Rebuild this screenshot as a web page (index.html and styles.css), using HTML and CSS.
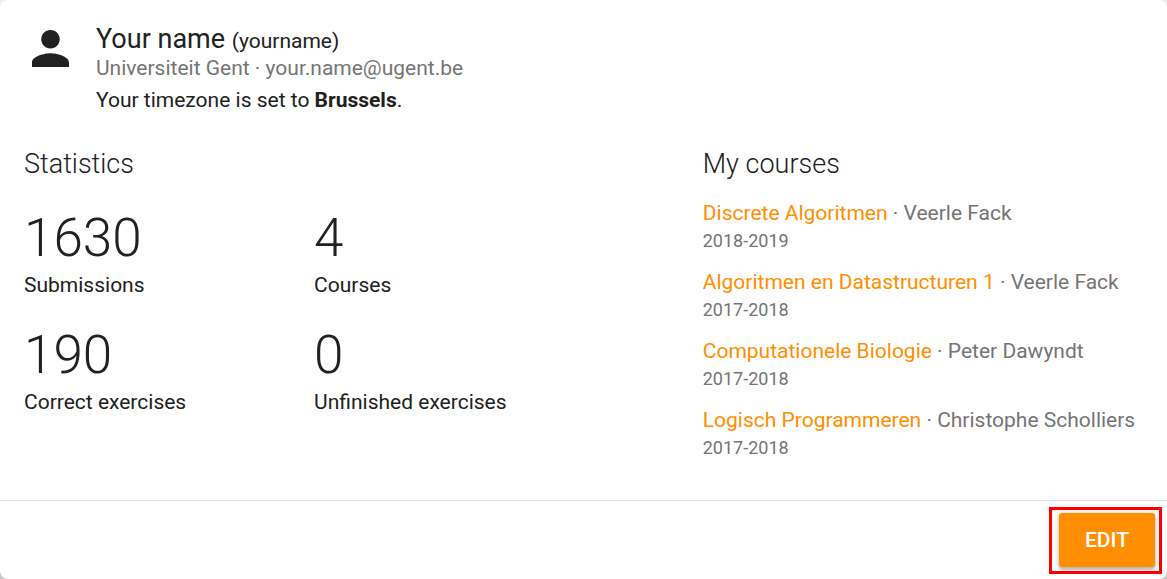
FILE: index.html
```html
<!DOCTYPE html>
<html lang="en">
<head>
<meta charset="utf-8">
<title>Profile</title>
<meta name="viewport" content="width=device-width, initial-scale=1">
<link rel="stylesheet" href="styles.css">
</head>
<body>
<main class="card">
  <header class="profile">
    <svg class="avatar" viewBox="4 4 16 16" aria-hidden="true"><path d="M12 12c2.21 0 4-1.79 4-4s-1.790-4-4-4-4 1.790-4 4 1.790 4 4 4zm0 2c-2.670 0-8 1.340-8 4v2h16v-2c0-2.660-5.330-4-8-4z"/></svg>
    <div class="identity">
      <h1 class="name">Your name <small class="username">(yourname)</small></h1>
      <p class="affiliation">Universiteit Gent · your.name@ugent.be</p>
      <p class="timezone">Your timezone is set to <b>Brussels</b>.</p>
    </div>
  </header>
  <div class="content">
    <section class="statistics">
      <h2 class="heading">Statistics</h2>
      <div class="stats">
        <div class="stat"><div class="value">1630</div><div class="label">Submissions</div></div>
        <div class="stat"><div class="value">4</div><div class="label">Courses</div></div>
        <div class="stat"><div class="value">190</div><div class="label">Correct exercises</div></div>
        <div class="stat"><div class="value">0</div><div class="label">Unfinished exercises</div></div>
      </div>
    </section>
    <section class="my-courses">
      <h2 class="heading">My courses</h2>
      <ul class="courses">
        <li class="course"><a href="#">Discrete Algoritmen</a> · Veerle Fack<div class="year">2018-2019</div></li>
        <li class="course"><a href="#">Algoritmen en Datastructuren 1</a> · Veerle Fack<div class="year">2017-2018</div></li>
        <li class="course"><a href="#">Computationele Biologie</a> · Peter Dawyndt<div class="year">2017-2018</div></li>
        <li class="course"><a href="#">Logisch Programmeren</a> · Christophe Scholliers<div class="year">2017-2018</div></li>
      </ul>
    </section>
  </div>
  <footer class="actions">
    <div class="highlight"><button class="edit" type="button">EDIT</button></div>
  </footer>
</main>
</body>
</html>
```
FILE: styles.css
```css
* { box-sizing: border-box; }
body {
  margin: 0;
  background: linear-gradient(#eee, #c8c8c8);
  color: #212121;
  font: 21px/28px Roboto, "Liberation Sans", sans-serif;
}
h1, h2, p, ul { margin: 0; padding: 0; }
.card {
  display: flex;
  flex-direction: column;
  min-height: 100vh;
  background: #fff;
  border-radius: 8px;
}
.profile {
  display: flex;
  padding: 24px 24px 0;
}
.avatar {
  width: 37px;
  height: 37px;
  margin: 6px 27px 0 8px;
  flex: none;
  fill: #212121;
}
.name {
  font-size: 27px;
  font-weight: 400;
  line-height: 30px;
}
.username {
  font-size: 21px;
  line-height: 20px;
}
.affiliation { color: #757575; }
.timezone { margin-top: 4px; }
.content {
  display: grid;
  grid-template-columns: 7fr 5fr;
  flex: 1;
  padding: 34px 24px;
}
.heading {
  font-size: 27px;
  font-weight: 300;
  line-height: 32px;
}
.stats {
  display: grid;
  grid-template-columns: 4fr 5fr;
  row-gap: 23px;
  margin-top: 26px;
}
.value {
  font-size: 53px;
  font-weight: 300;
  line-height: 64px;
}
.label { line-height: 30px; }
.my-courses { padding-left: 26px; }
.courses {
  display: grid;
  gap: 13px;
  margin-top: 19px;
  list-style: none;
  color: #757575;
}
a {
  color: #ff8f00;
  text-decoration: none;
}
.year { font-size: 18px; }
.actions {
  display: flex;
  justify-content: flex-end;
  padding: 6px 5px 5px;
  border-top: 1px solid #e0e0e0;
}
.highlight {
  padding: 3px 4px 4px 7px;
  border: 3px solid #f00;
}
.edit {
  display: block;
  width: 96px;
  height: 54px;
  border: 0;
  border-radius: 3px;
  background: #ff8f00;
  color: #fff;
  font: 500 21px/28px Roboto, "Liberation Sans", sans-serif;
  box-shadow: 0 3px 3px #0003, 0 1px 6px #0003;
}
```
